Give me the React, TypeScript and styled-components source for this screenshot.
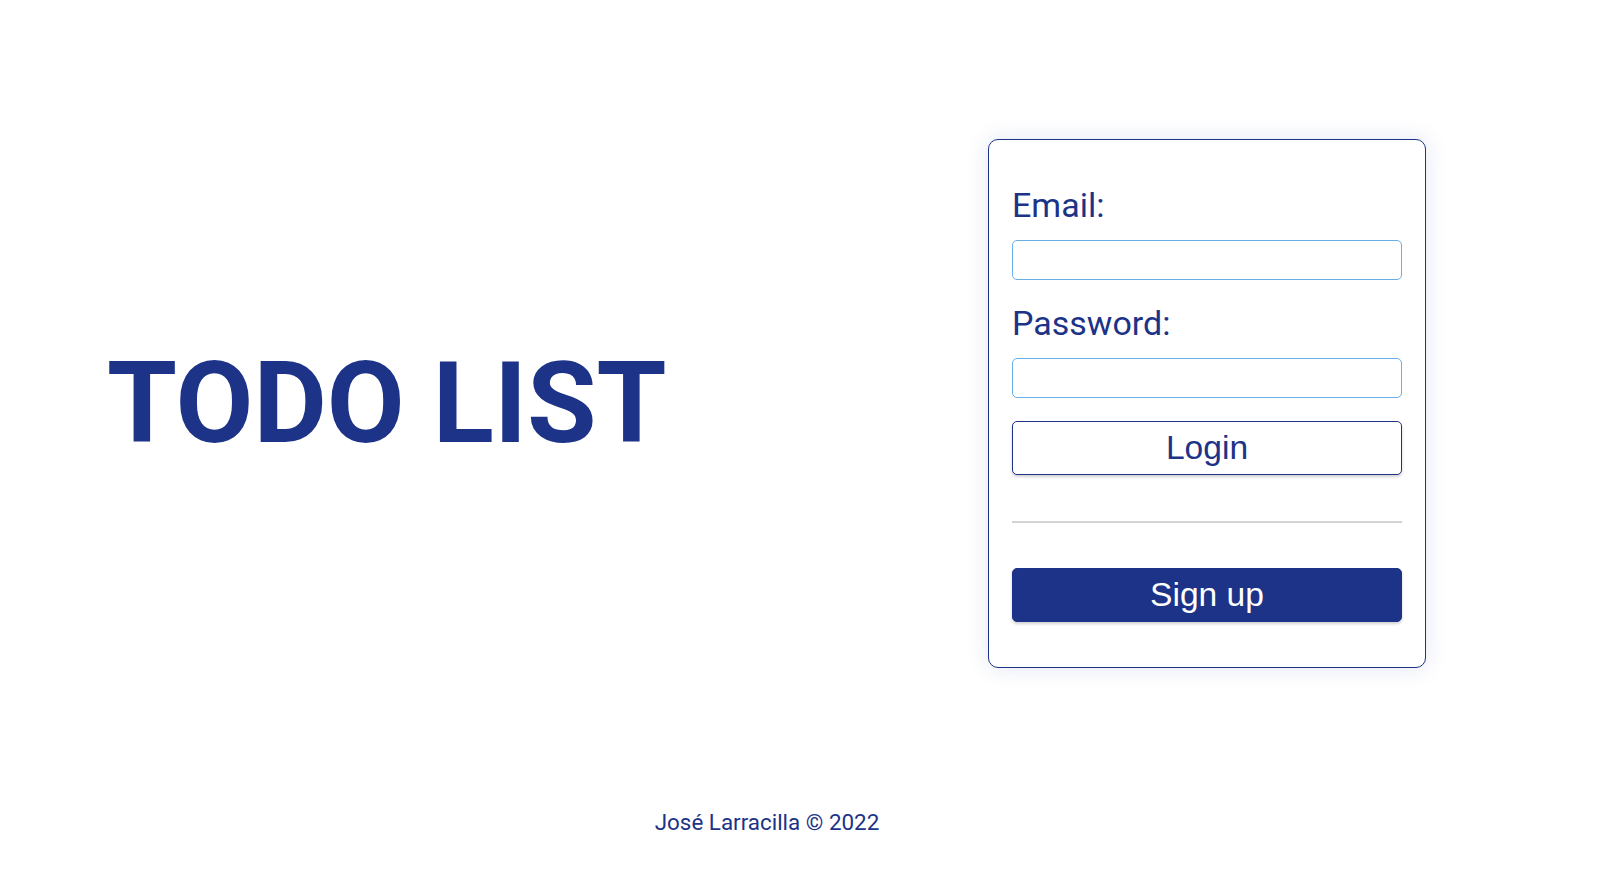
import React from "react";
import styled, { createGlobalStyle } from "styled-components";

const Global = createGlobalStyle`
  html, body { margin: 0; padding: 0; background: #ffffff; }
  body { font-family: Roboto, "Liberation Sans", sans-serif; color: #1c3387; }
  * { box-sizing: border-box; }
`;

const Page = styled.div`
  width: 1602px;
  height: 890px;
  display: flex;
  flex-direction: column;
`;

const Main = styled.main`
  display: flex;
  justify-content: space-between;
  align-items: center;
  padding: 139px 176px 0 107px;
`;

const Title = styled.h1`
  margin: 0;
  font-family: Roboto, sans-serif;
  font-weight: 700;
  font-size: 113px;
  line-height: 1;
  color: #1c3387;
`;

const Card = styled.form`
  width: 438px;
  border: 1px solid #1c3387;
  border-radius: 10px;
  box-shadow: 0 0 22px rgba(60, 80, 170, 0.14);
  padding: 45px 23px 45px 23px;
  display: flex;
  flex-direction: column;
  background: #fff;
`;

const Label = styled.label`
  font-family: Roboto, sans-serif;
  font-size: 34px;
  line-height: normal;
  color: #1c3387;
  margin-bottom: 15px;
`;

const Input = styled.input`
  height: 40px;
  width: 100%;
  border: 1px solid #68aee8;
  border-radius: 5px;
  margin: 0 0 23px 0;
  padding: 0 8px;
  font-size: 18px;
  outline: none;
`;

const Button = styled.button<{ $primary?: boolean }>`
  height: 54px;
  width: 100%;
  border-radius: 5px;
  border: 1px solid #1c3387;
  background: ${(p) => (p.$primary ? "#1c3387" : "#ffffff")};
  color: ${(p) => (p.$primary ? "#ffffff" : "#1c3387")};
  font-family: "Liberation Sans", Arial, sans-serif;
  font-size: 33.6px;
  line-height: 1;
  box-shadow: 0 2px 3px rgba(0, 0, 0, 0.18);
  cursor: pointer;
  padding: 0;
`;

const Divider = styled.hr`
  margin: 46px 0 45px 0;
  border: none;
  height: 2px;
  background: #d3d3d3;
`;

const Footer = styled.footer`
  margin-top: auto;
  padding: 0 0 55px 0;
  display: flex;
  justify-content: center;
`;

const FooterText = styled.p`
  margin: 0 0 0 -68px;
  font-family: Roboto, sans-serif;
  font-size: 22.4px;
  line-height: normal;
  color: #1c3387;
`;

export default function App() {
  return (
    <Page>
      <Global />
      <Main>
        <Title>TODO LIST</Title>
        <Card onSubmit={(e) => e.preventDefault()}>
          <Label htmlFor="email">Email:</Label>
          <Input id="email" type="email" />
          <Label htmlFor="password">Password:</Label>
          <Input id="password" type="password" />
          <Button type="submit">Login</Button>
          <Divider />
          <Button type="button" $primary>
            Sign up
          </Button>
        </Card>
      </Main>
      <Footer>
        <FooterText>José Larracilla © 2022</FooterText>
      </Footer>
    </Page>
  );
}
